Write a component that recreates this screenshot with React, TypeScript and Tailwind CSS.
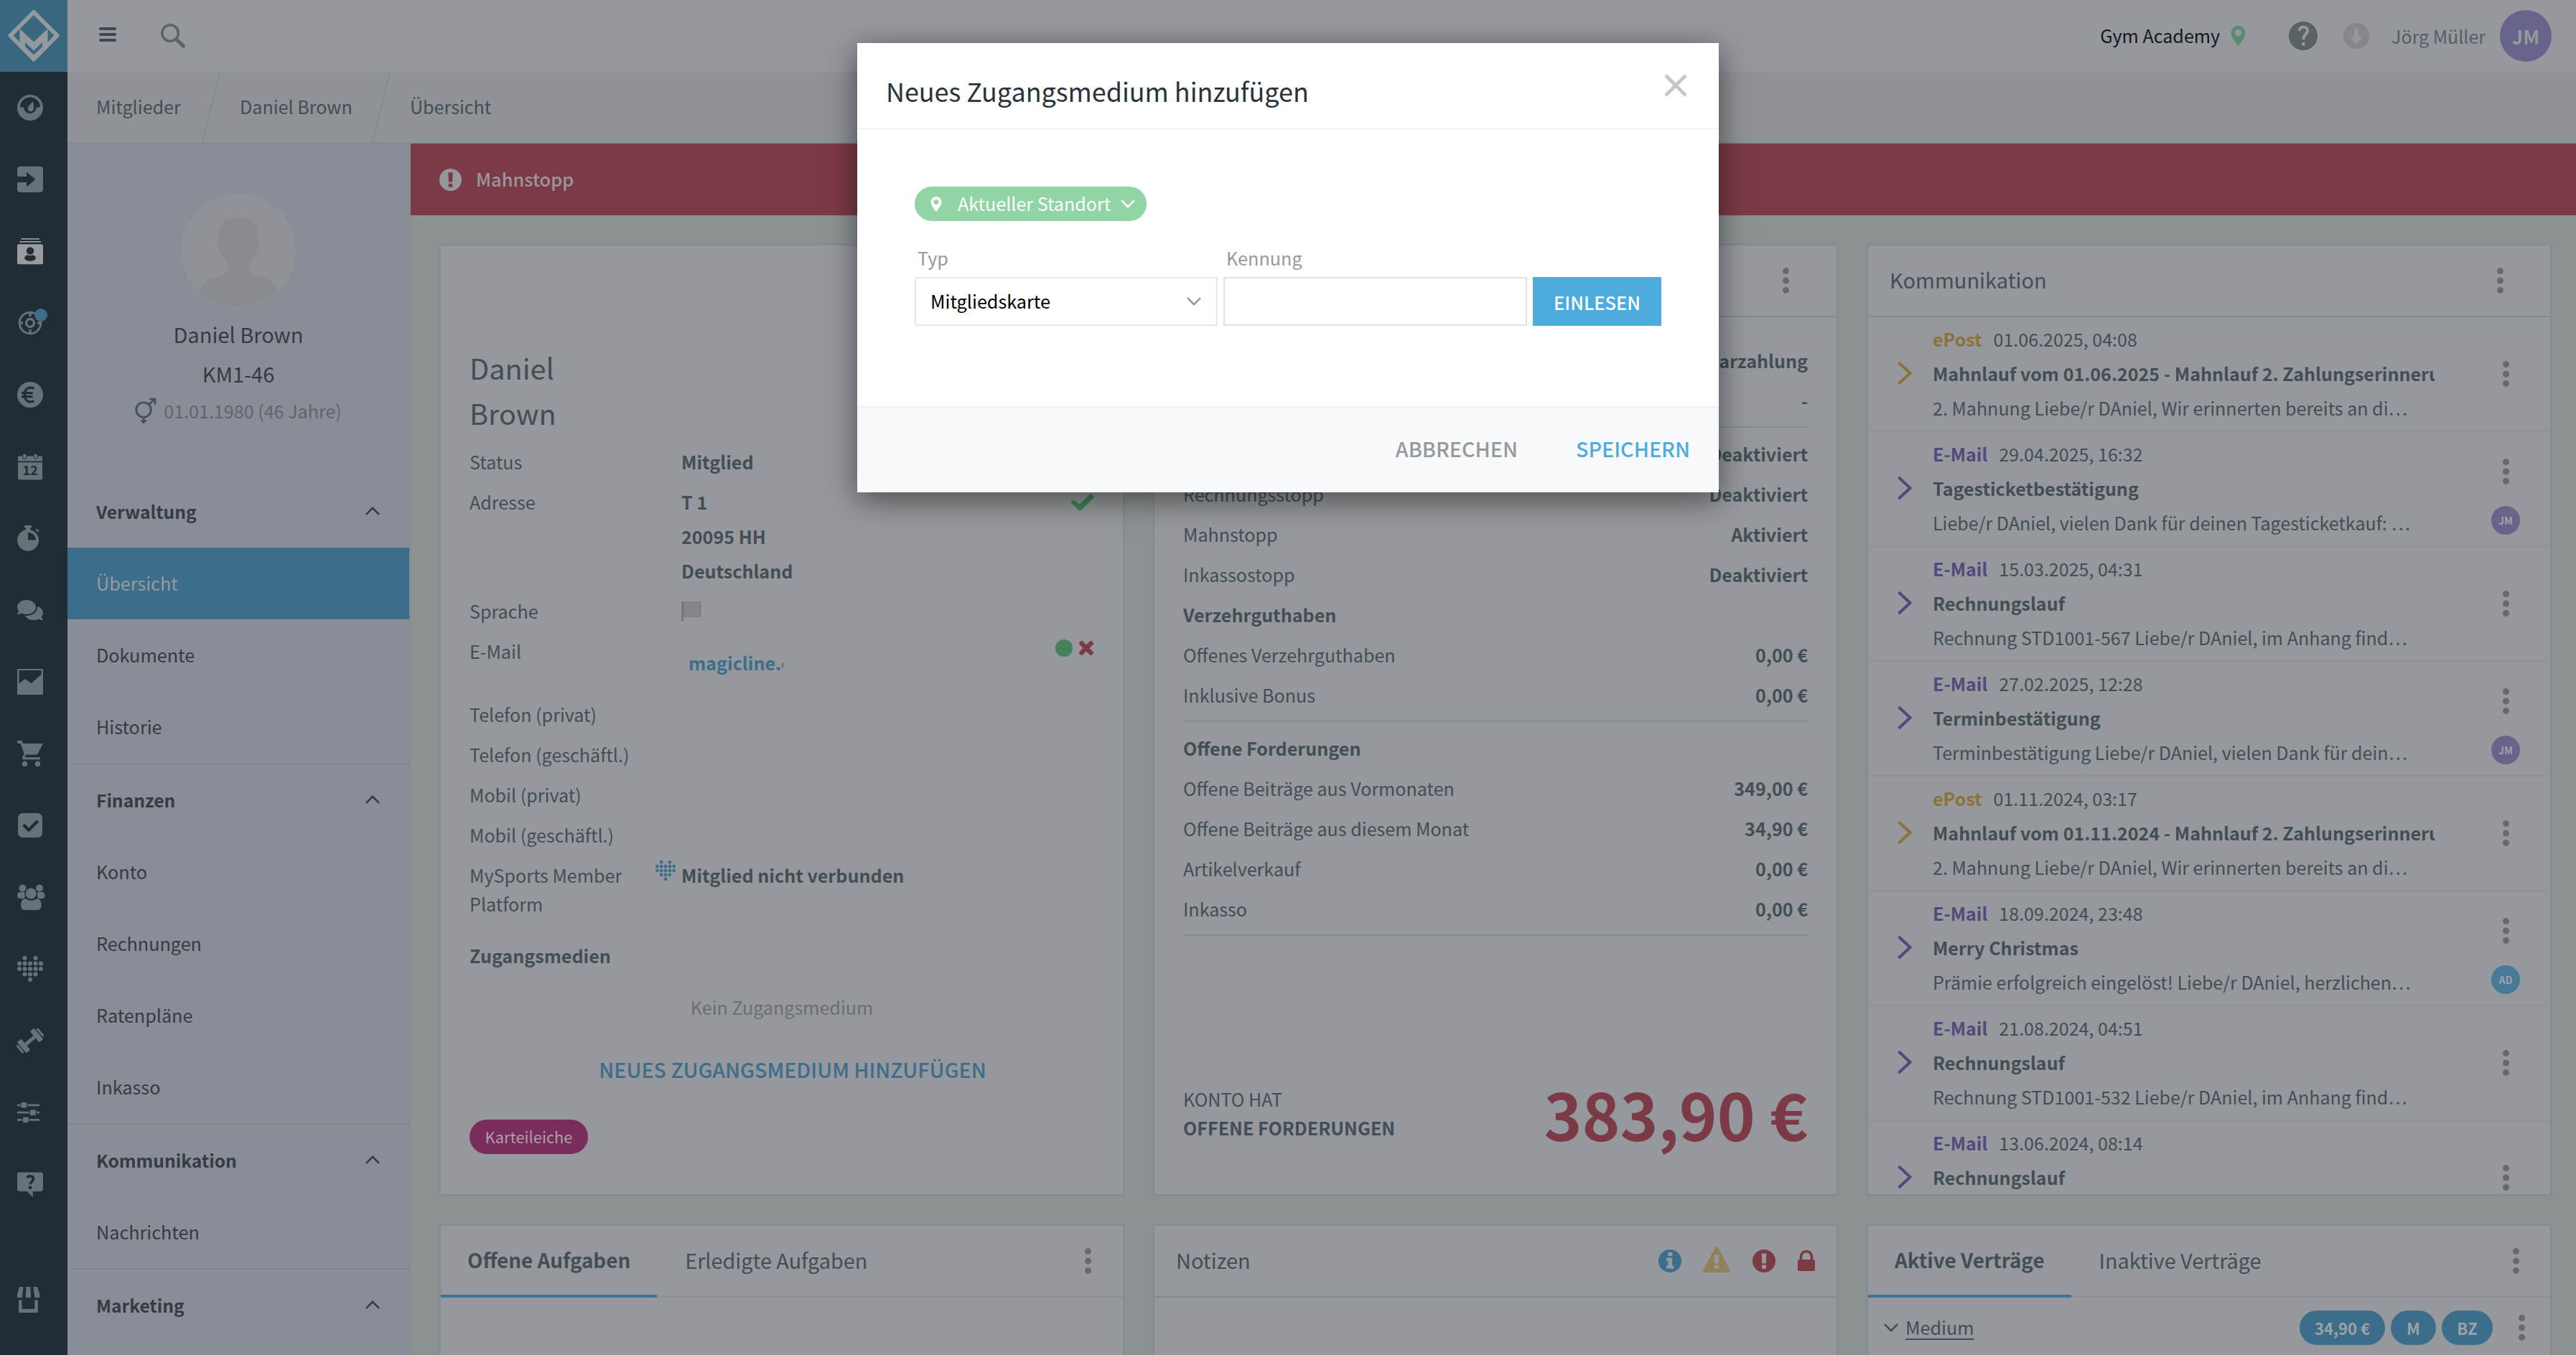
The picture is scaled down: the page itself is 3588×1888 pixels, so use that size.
import React from "react";
import type { ReactNode } from "react";
import { FaComments } from "react-icons/fa";
import { MdShoppingCart } from "react-icons/md";

/* ---------- shared icons ---------- */

type IconProps = { className?: string };

const Dots = ({ className = "" }: IconProps) => (
  <svg viewBox="0 0 9 36" className={`h-9 w-[9px] shrink-0 fill-[#66696e] ${className}`}>
    <circle cx="4.5" cy="4.6" r="4.5" />
    <circle cx="4.5" cy="18" r="4.5" />
    <circle cx="4.5" cy="31.4" r="4.5" />
  </svg>
);

const Chevron = ({ className = "" }: IconProps) => (
  <svg viewBox="0 0 20 12" className={`h-3 w-5 shrink-0 fill-none ${className}`}>
    <path d="M1 1.2 10 10.2 19 1.2" stroke="currentColor" strokeWidth="2.600" />
  </svg>
);

const Pin = ({ className = "" }: IconProps) => (
  <svg viewBox="0 0 20 28" className={`shrink-0 fill-current ${className}`}>
    <path
      fillRule="evenodd"
      d="M10 0C4.5 0 0 4.4 0 9.9 0 16.8 10 28 10 28s10-11.2 10-18.1C20 4.400 15.500 0 10 0Zm0 5.200a4.700 4.700 0 1 1 0 9.400 4.700 4.700 0 0 1 0-9.400Z"
    />
  </svg>
);

const ExclCircle = ({ className = "" }: IconProps) => (
  <svg viewBox="0 0 32 32" className={`shrink-0 fill-current ${className}`}>
    <path
      fillRule="evenodd"
      d="M16 0a16 16 0 1 1 0 32 16 16 0 0 1 0-32Zm-3.300 5.400.6 14h5.400l.6-14Zm.4 16v5.300h5.800v-5.300Z"
    />
  </svg>
);

const HeartDots = ({ className = "" }: IconProps) => {
  const rows: [number, number[]][] = [
    [3, [10.500, 25.500]],
    [10.500, [3, 10.500, 18, 25.500, 33]],
    [18, [3, 10.500, 18, 25.500, 33]],
    [25.500, [10.500, 18, 25.500]],
    [33, [18]],
  ];
  return (
    <svg viewBox="0 0 36 36" className={`shrink-0 fill-current ${className}`}>
      {rows.map(([y, xs]) => xs.map((x) => <circle key={`${x}-${y}`} cx={x} cy={y} r="3.050" />))}
    </svg>
  );
};

/* ---------- navigation rail ---------- */

const RailSvg = ({ children }: { children: ReactNode }) => (
  <svg viewBox="0 0 36 36" className="h-9 w-9 overflow-visible fill-current">
    {children}
  </svg>
);

const railIcons: ReactNode[] = [
  <RailSvg>
    <circle cx="18" cy="18" r="18" />
    <path className="fill-[#202d36]" d="M4 17.500a14 14 0 0 1 28 0h-5.500c0 1.800-.5 3.300-1.300 4.700A9.500 9.500 0 0 1 18 26a9.500 9.500 0 0 1-7.400-3.600A8.800 8.800 0 0 1 9 17.500Z" />
    <path d="M22.200 9.500c1 4.500 1.300 8.500.6 11a4.400 4.400 0 0 1-8.300-.4c-.6-2.700 3.200-7 7.700-10.600Z" />
  </RailSvg>,
  <RailSvg>
    <path d="M4 0h28a4 4 0 0 1 4 4v28a4 4 0 0 1-4 4H4a4 4 0 0 1-4-4V22h13v6.500L25.500 18 13 7.500V14H0V4a4 4 0 0 1 4-4Z" />
  </RailSvg>,
  <RailSvg>
    <path d="M5.500 0h25.500v1.800H5.500ZM3 3.900h30v1.800H3Z" />
    <path fillRule="evenodd" d="M2.500 8.200h31A2.500 2.500 0 0 1 36 10.700v23a2.500 2.500 0 0 1-2.500 2.500h-31A2.500 2.500 0 0 1 0 33.700v-23a2.500 2.500 0 0 1 2.500-2.500Z" />
    <circle className="fill-[#202d36]" cx="18" cy="17.500" r="5.200" />
    <path className="fill-[#202d36]" d="M10 28c.3-3.200 2.600-4.600 5-4.800 1.800 1.300 4.200 1.300 6 0 2.400.2 4.700 1.600 5 4.800-1.500 3-5 3.700-8 3.700s-6.500-.7-8-3.700Z" />
  </RailSvg>,
  <RailSvg>
    <g fill="none" stroke="currentColor" strokeWidth="3">
      <circle cx="18" cy="18" r="14.800" />
      <circle cx="18" cy="18" r="5.500" strokeWidth="3.400" />
      <path d="M18 3v6M18 27v6M3 18h5M28 18h5" strokeWidth="3.500" />
    </g>
  </RailSvg>,
  <RailSvg>
    <circle cx="18" cy="18" r="18" />
    <path className="fill-none stroke-[#202d36]" strokeWidth="3.200" d="M23.500 9.400c-7-3.200-13.300-.2-13.300 8.600s6.300 11.800 13.300 8.600M6 15.600h15.500M6 20.600h15.500" />
  </RailSvg>,
  <RailSvg>
    <path d="M2.500 3.500h31A1.500 1.500 0 0 1 35 5v5.500H1V5a1.500 1.500 0 0 1 1.500-1.500ZM1 12.300h34V34a2.500 2.500 0 0 1-2.500 2.500h-29A2.500 2.500 0 0 1 1 34Z" />
    <rect x="7.500" y=".3" width="5.600" height="6.800" rx="2.200" className="stroke-[#202d36]" strokeWidth="1" />
    <rect x="22.900" y=".3" width="5.600" height="6.800" rx="2.200" className="stroke-[#202d36]" strokeWidth="1" />
    <text x="18" y="30.300" textAnchor="middle" className="fill-[#202d36] text-[18px] font-bold">12</text>
  </RailSvg>,
  <RailSvg>
    <path fillRule="evenodd" d="M10 1.500C10 .7 10.700 0 11.500 0h7c.8 0 1.500.7 1.500 1.500v1.800h-2V6a15 15 0 1 1-6 0V3.300h-2ZM15 10v10.500h11.200A11.200 11.200 0 0 0 15 10Z" />
    <path d="m25.500 6 1.500-1.700 3.500 3-1.300 2.500Z" />
  </RailSvg>,
  <FaComments className="h-9 w-9" />,
  <RailSvg>
    <path fillRule="evenodd" d="M1 0h34a1 1 0 0 1 1 1v34a1 1 0 0 1-1 1H1a1 1 0 0 1-1-1V1a1 1 0 0 1 1-1Zm1.500 2v18.500l8.500-6.500 8.500 6L33.500 8V2Z" />
  </RailSvg>,
  <RailSvg>
    <path d="M0 0h6.500l1.600 4H36l-7 13.500c-.6 1.200-1.600 2-3 2H12l-1.800 3.800H32v3H9.500c-2.200 0-3.200-1.500-2.200-3.500l2.400-4.600L4.500 3.800H0Z" />
    <circle cx="10.500" cy="32.300" r="3.700" />
    <circle cx="28.500" cy="32.300" r="3.700" />
  </RailSvg>,
  <RailSvg>
    <rect x="1" y="1" width="34" height="34" rx="6.500" />
    <path className="fill-none stroke-[#202d36]" strokeWidth="4.400" strokeLinecap="round" strokeLinejoin="round" d="m10 18.500 6 6L27.500 13" />
  </RailSvg>,
  <RailSvg>
    <circle cx="7.500" cy="5.500" r="5" />
    <circle cx="31" cy="5.500" r="5" />
    <path d="M0 15.500c0-3 1.500-4.500 4-4.500h5.500c1 0 1.500 1 1.500 2.500 0 3-.5 6.500-3 6.500H4c-2.500 0-4-1.500-4-4.500ZM38.500 15.500c0-3-1.500-4.500-4-4.500H29c-1 0-1.500 1-1.500 2.500 0 3 .5 6.500 3 6.500h4c2.500 0 4-1.500 4-4.500Z" />
    <circle cx="19.200" cy="13" r="8.300" className="stroke-[#202d36]" strokeWidth="1.500" />
    <path d="M5 29c0-5 2-9 6.500-9 4.500 3.500 11 3.500 15.500 0 4.500 0 6.700 4 6.700 9 0 4-1.700 7-5.500 7H10.500C6.700 36 5 33 5 29Z" />
  </RailSvg>,
  <HeartDots className="h-9 w-9" />,
  <RailSvg>
    <g transform="rotate(-40 18 18)">
      <rect x="10" y="15.600" width="16" height="4.800" />
      <rect x="2.600" y="8" width="7.400" height="20" rx="1.500" />
      <rect x="26" y="8" width="7.400" height="20" rx="1.500" />
      <rect x="-1.800" y="11" width="3" height="14" rx="1.200" />
      <rect x="34.800" y="11" width="3" height="14" rx="1.200" />
    </g>
  </RailSvg>,
  <RailSvg>
    <path d="M0 6.500h31v2.800H0ZM0 16.700h31v2.800H0ZM0 27h31v2.800H0Z" />
    <g className="stroke-[#202d36]" strokeWidth="1">
      <rect x="4.700" y="3.500" width="9" height="8.600" rx="2" />
      <rect x="17.400" y="13.800" width="9" height="8.600" rx="2" />
      <rect x="7.300" y="24.100" width="9" height="8.600" rx="2" />
    </g>
  </RailSvg>,
  <RailSvg>
    <path d="M3 1.500h30a3 3 0 0 1 3 3v20.600a3 3 0 0 1-3 3H21.800v8L13.500 28.100H3a3 3 0 0 1-3-3V4.500a3 3 0 0 1 3-3Z" />
    <path className="fill-none stroke-[#202d36]" strokeWidth="3.600" d="M13.300 8.600c3.500-3 9.300-1.800 9.300 2 0 3.600-4.300 3.300-4.500 7.600" />
    <circle className="fill-[#202d36]" cx="18" cy="22.700" r="2.400" />
  </RailSvg>,
];

const StoreIcon = () => (
  <RailSvg>
    <path d="M3 0h5.500L6.800 15H0v-5ZM12.500 0h5.800l.9 15h-7.600ZM22.500 0h5.500l3.200 10v5h-6.800Z" />
    <path d="M2 18.500h4.500v12.200h17.800V18.500h4.500v16.300a1.200 1.200 0 0 1-1.200 1.200H3.200A1.200 1.200 0 0 1 2 34.800Z" />
  </RailSvg>
);

const Rail = () => (
  <nav className="flex h-full w-[94px] shrink-0 flex-col bg-[#202d36] text-[#677178]">
    <div className="flex h-[100px] items-center justify-center bg-[#38677f]">
      <svg viewBox="0 0 72 72" className="h-[72px] w-[72px]">
        <path d="M36 3 68.500 35.500 36 68.500 3.500 35.500Z" className="fill-none stroke-[#96999c]" strokeWidth="6" strokeLinejoin="round" />
        <path d="M16.500 26 36 44.500 55.500 26v20.500L36 68 16.500 46.500Z" className="fill-[#96999c]" />
        <path d="M24 45 36 56.500 48 45v6L36 62.500 24 51Z" className="fill-[#38677f]" />
      </svg>
    </div>
    {railIcons.map((icon, i) => (
      <div key={i} className={`flex h-[100px] items-center pl-6 ${i === 2 ? "text-[#999b9e]" : ""}`}>
        <div className="relative flex h-9 w-9 items-center justify-center">
          {icon}
          {i === 3 && <span className="absolute -top-[2px] left-6 h-[18px] w-[18px] rounded-full bg-[#3c6d8a]" />}
        </div>
      </div>
    ))}
    <div className="mt-[93px] pl-6">
      <StoreIcon />
    </div>
  </nav>
);

/* ---------- top bars ---------- */

const TopBar = () => (
  <header className="flex h-[100px] shrink-0 items-center bg-[#95989c] pr-[34px]">
    <div className="ml-11 flex w-6 flex-col gap-1 pb-1">
      <span className="h-1 rounded-sm bg-[#3d4852]" />
      <span className="h-1 rounded-sm bg-[#3d4852]" />
      <span className="h-1 rounded-sm bg-[#3d4852]" />
    </div>
    <svg viewBox="0 0 34 34" className="ml-[62px] h-[34px] w-[34px] fill-none stroke-[#5a6468]">
      <circle cx="13" cy="13" r="11.300" strokeWidth="3.500" />
      <path d="m23.500 23.500 8 7.800" strokeWidth="5" strokeLinecap="round" />
    </svg>
    <span className="ml-auto text-[25.100px] text-[#14191f]">Gym Academy</span>
    <Pin className="ml-[15px] h-7 w-[21px] text-[#5c8a70]" />
    <svg viewBox="0 0 40 40" className="ml-[60px] h-10 w-10">
      <circle cx="20" cy="20" r="20" className="fill-[#596165]" />
      <path d="M14.500 13c1-8 12.500-6.500 11.500.5-.6 4-5.500 4.700-5.800 11.500" className="fill-none stroke-[#95989c]" strokeWidth="4" />
      <rect x="18" y="29" width="4.400" height="4.600" className="fill-[#95989c]" />
    </svg>
    <svg viewBox="0 0 36 36" className="ml-9 h-9 w-9">
      <circle cx="18" cy="18" r="18" className="fill-[#84888b]" />
      <path d="M15.300 8h5.600v11.500H27L18.100 29 9.200 19.500h6.100Z" className="fill-[#95989c]" />
    </svg>
    <span className="ml-[31px] text-[25px] text-[#545e63]">Jörg Müller</span>
    <span className="ml-5 flex h-[72px] w-[72px] items-center justify-center rounded-full bg-[#66648a] text-[27px] font-bold text-[#95989c]">
      JM
    </span>
  </header>
);

const Slash = () => (
  <svg viewBox="0 0 26 96" className="h-24 w-[26px] fill-none stroke-[#848b8f]">
    <path d="M25 0 1 96" strokeWidth="2" />
  </svg>
);

const Breadcrumbs = () => (
  <div className="flex h-[100px] shrink-0 items-center border-b-2 border-[#848b8d] bg-[#8f9296] pl-[40px] text-[25.100px] text-[#434e54]">
    <span className="w-[147px]">Mitglieder</span>
    <Slash />
    <span className="ml-[27px] w-[184px]">Daniel Brown</span>
    <Slash />
    <span className="ml-[27px]">Übersicht</span>
  </div>
);

/* ---------- member side panel ---------- */

const sections = [
  { title: "Verwaltung", items: ["Übersicht", "Dokumente", "Historie"] },
  { title: "Finanzen", items: ["Konto", "Rechnungen", "Ratenpläne", "Inkasso"] },
  { title: "Kommunikation", items: ["Nachrichten"] },
  { title: "Marketing", items: [] },
];

const SidePanel = () => (
  <aside className="flex h-full w-[478px] shrink-0 flex-col border-r-2 border-[#848b8d] bg-[#898d95] text-[25.200px] text-[#343b44]">
    <div className="flex h-[463px] shrink-0 flex-col items-center pt-[70px]">
      <svg viewBox="0 0 160 160" className="h-40 w-40">
        <circle cx="80" cy="80" r="80" className="fill-[#8f9296]" />
        <path
          className="fill-[#888b8f]"
          d="M80 32c18 0 27 12 27.500 26v8c2 1 2 4 1.500 7-.5 4-2 7-4.500 7.500-2 8-5 14-9.500 18-1.500 2-1.500 4 0 6 1 3 1.500 6 5 7.500 8 3.500 16 5 23 8.500 5 3 9 8 12 16A80 80 0 0 1 25 136c3-7 7-12 12-15.500 7-3.500 15-5 23-8.500 3.500-1.500 4-4.500 5-7.500 1.500-2 1.500-4 0-6-4.500-4-7.500-10-9.500-18-2.500-.5-4-3.500-4.500-7.500-.5-3-.5-6 1.500-7v-8C53 44 62 32 80 32Z"
        />
      </svg>
      <span className="mt-2 text-[29px] leading-[55px]">Daniel Brown</span>
      <span className="text-[29px] leading-[55px]">KM1-46</span>
      <div className="flex items-center gap-[10px] pt-[2px] text-[25.100px] text-[#60656d]">
        <svg viewBox="0 0 30 36" className="h-9 w-[30px] fill-none stroke-[#434e54]" strokeWidth="2.600">
          <circle cx="12" cy="17" r="10.300" />
          <path d="M12 27.500V36M8 32.500h8M19.500 9.500 27.500 2M20.500 2H28v7.500" />
        </svg>
        <span className="leading-[44px]">01.01.1980 (46 Jahre)</span>
      </div>
    </div>
    {sections.map((s, i) => (
      <div key={s.title} className={`flex flex-col ${i > 0 ? "border-t-2 border-[#80848b]" : ""}`}>
        <div className="flex h-[100px] items-center justify-between pr-[41px] pb-[2px] pl-10">
          <span className="text-[24.600px] font-bold">{s.title}</span>
          <Chevron className="rotate-180" />
        </div>
        {s.items.map((item) => (
          <div
            key={item}
            className={`flex h-[100px] items-center pl-10 ${item === "Übersicht" ? "bg-[#3c6d8a] text-[#989b9f]" : ""}`}
          >
            {item}
          </div>
        ))}
      </div>
    ))}
  </aside>
);

/* ---------- cards ---------- */

const Card = ({ className = "", children }: { className?: string; children?: ReactNode }) => (
  <section className={`flex w-[954px] flex-col overflow-hidden border-2 border-[#848b8d] bg-[#95989c] ${className}`}>
    {children}
  </section>
);

const Row = ({ label, children }: { label: string; children?: ReactNode }) => (
  <div className="flex py-1 leading-[48px]">
    <span className="w-[295px] shrink-0">{label}</span>
    {children}
  </div>
);

const MemberCard = () => (
  <Card className="h-[1326px] pr-[40px] pl-[40px] text-[25.100px]">
    <h1 className="mt-[138px] w-[160px] text-[39.600px] leading-[63px]">Daniel Brown</h1>
    <div className="mt-[9px]">
      <Row label="Status">
        <b>Mitglied</b>
      </Row>
      <Row label="Adresse">
        <b className="flex-1">
          T 1<br />
          20095 HH
          <br />
          Deutschland
        </b>
        <svg viewBox="0 0 32 25" className="mt-3 h-[25px] w-8 fill-[#43825a]">
          <path d="M4.500 10.500a2 2 0 0 0-2.800 0l-1 1a2 2 0 0 0 0 2.800l10 10a2 2 0 0 0 2.800 0L31 7a2 2 0 0 0 0-2.800L28.500 1.700a2 2 0 0 0-2.800 0L12 15.500Z" />
        </svg>
      </Row>
      <Row label="Sprache">
        <svg viewBox="0 0 28 30" className="mt-[10px] h-[30px] w-7">
          <path d="M3 2.500c6-3 12 2 24-1v20c-10 3-16-2-24 1.500Z" className="fill-[#83868a] stroke-[#74777b]" strokeWidth="1" />
          <path d="M1.300 1v28" className="stroke-[#6b6e72]" strokeWidth="2" />
        </svg>
      </Row>
      <div className="flex h-[88px] py-1 leading-[48px]">
        <span className="w-[305px] shrink-0">E-Mail</span>
        <b className="mt-4 h-12 w-[132px] overflow-hidden whitespace-nowrap text-[#3c6d8a]">magicline.com</b>
        <span className="mt-2 ml-auto h-6 w-6 rounded-full bg-[#43825a]" />
        <svg viewBox="0 0 20 20" className="mt-[10px] mr-[1px] ml-[9px] h-5 w-5 stroke-[#7c3a47]">
          <path d="m3.500 3.500 13 13M16.500 3.500l-13 13" strokeWidth="6.500" strokeLinecap="round" />
        </svg>
      </div>
      <Row label="Telefon (privat)" />
      <Row label="Telefon (geschäftl.)" />
      <Row label="Mobil (privat)" />
      <Row label="Mobil (geschäftl.)" />
      <div className="flex pt-2 pb-6 leading-10">
        <span className="w-[259px] shrink-0 pr-8">MySports Member Platform</span>
        <HeartDots className="mr-2 h-7 w-7 text-[#3c6d8a]" />
        <b>Mitglied nicht verbunden</b>
      </div>
      <div className="py-1 leading-[48px] font-bold">Zugangsmedien</div>
      <div className="mt-4 text-center leading-[56px] text-[#6b6e73]">Kein Zugangsmedium</div>
      <div className="mt-[9px] pl-[30px] text-center text-[28.600px] leading-[100px] font-medium whitespace-nowrap text-[#3c6d8a]">
        NEUES ZUGANGSMEDIUM HINZUFÜGEN
      </div>
      <span className="mt-5 flex h-12 w-[165px] items-center justify-center rounded-full bg-[#7a2d5c] text-[21.900px] text-[#a79fa9]">
        Karteileiche
      </span>
    </div>
  </Card>
);

type Line = [string, string];

const Lines = ({ rows, last }: { rows: Line[]; last?: boolean }) => (
  <div className={`border-b-2 border-[#848d90] pb-2 ${last ? "" : "mb-2"}`}>
    {rows.map(([label, value], i) => (
      <div key={i} className="flex h-14 items-center justify-between leading-[48px]">
        <span className={value || label === "Inkasso" ? "" : "font-bold"}>{label}</span>
        <b>{value}</b>
      </div>
    ))}
  </div>
);

const AccountCard = () => (
  <Card className="h-[1326px] text-[25.100px]">
    <div className="flex h-[100px] shrink-0 items-center justify-end border-b-2 border-[#848b8d] pr-[66px]">
      <Dots />
    </div>
    <div className="mx-10 mt-8">
      <Lines rows={[["", "Barzahlung"], ["", "-"]]} />
      <Lines
        rows={[
          ["", "Deaktiviert"],
          ["Rechnungsstopp", "Deaktiviert"],
          ["Mahnstopp", "Aktiviert"],
          ["Inkassostopp", "Deaktiviert"],
          ["Verzehrguthaben", ""],
          ["Offenes Verzehrguthaben", "0,00 €"],
          ["Inklusive Bonus", "0,00 €"],
        ]}
      />
      <Lines
        last
        rows={[
          ["Offene Forderungen", ""],
          ["Offene Beiträge aus Vormonaten", "349,00 €"],
          ["Offene Beiträge aus diesem Monat", "34,90 €"],
          ["Artikelverkauf", "0,00 €"],
          ["Inkasso", "0,00 €"],
        ]}
      />
    </div>
    <div className="mx-10 mt-auto mb-[63px] flex items-center justify-between">
      <div className="leading-10">
        KONTO HAT
        <br />
        <b>OFFENE FORDERUNGEN</b>
      </div>
      <span className="text-[89.800px] leading-[100px] font-bold text-[#7c3a47]">383,90 €</span>
    </div>
  </Card>
);

type Message = { kind: "ePost" | "E-Mail"; date: string; title: string; text: string; by?: "JM" | "AD" };

const messages: Message[] = [
  { kind: "ePost", date: "01.06.2025, 04:08", title: "Mahnlauf vom 01.06.2025 - Mahnlauf 2. Zahlungserinnerung", text: "2. Mahnung Liebe/r DAniel, Wir erinnerten bereits an di…" },
  { kind: "E-Mail", date: "29.04.2025, 16:32", title: "Tagesticketbestätigung", text: "Liebe/r DAniel, vielen Dank für deinen Tagesticketkauf: …", by: "JM" },
  { kind: "E-Mail", date: "15.03.2025, 04:31", title: "Rechnungslauf", text: "Rechnung STD1001-567 Liebe/r DAniel, im Anhang find…" },
  { kind: "E-Mail", date: "27.02.2025, 12:28", title: "Terminbestätigung", text: "Terminbestätigung Liebe/r DAniel, vielen Dank für dein…", by: "JM" },
  { kind: "ePost", date: "01.11.2024, 03:17", title: "Mahnlauf vom 01.11.2024 - Mahnlauf 2. Zahlungserinnerung", text: "2. Mahnung Liebe/r DAniel, Wir erinnerten bereits an di…" },
  { kind: "E-Mail", date: "18.09.2024, 23:48", title: "Merry Christmas", text: "Prämie erfolgreich eingelöst! Liebe/r DAniel, herzlichen…", by: "AD" },
  { kind: "E-Mail", date: "21.08.2024, 04:51", title: "Rechnungslauf", text: "Rechnung STD1001-532 Liebe/r DAniel, im Anhang find…" },
  { kind: "E-Mail", date: "13.06.2024, 08:14", title: "Rechnungslauf", text: "" },
];

const MessageRow = ({ m }: { m: Message }) => {
  const tone = m.kind === "ePost" ? "text-[#8c7238]" : "text-[#504a7d]";
  return (
    <div className="mr-[2px] flex h-40 shrink-0 border-b-2 border-[#8e9195]">
      <svg viewBox="0 0 21 34" className={`mt-[61px] ml-10 h-[34px] w-[21px] shrink-0 fill-none ${tone}`}>
        <path d="M2.500 2 18.500 17 2.500 32" stroke="currentColor" strokeWidth="4" />
      </svg>
      <div className="ml-[29px] w-[699px] overflow-hidden pt-[6px] text-[25.050px] leading-[48px] whitespace-nowrap">
        <div className="flex gap-4">
          <b className={tone}>{m.kind}</b>
          <span>{m.date}</span>
        </div>
        <div className="font-bold">{m.title}</div>
        <div>{m.text}</div>
      </div>
      <div className={`ml-[79px] flex w-10 flex-col items-center ${m.by ? "pt-[37px]" : "pt-[61px]"}`}>
        <Dots />
        {m.by && (
          <span
            className={`mt-[30px] flex h-10 w-10 items-center justify-center rounded-full text-[14px] font-bold text-[#a0a1ab] ${
              m.by === "JM" ? "bg-[#66648a]" : "bg-[#467a97]"
            }`}
          >
            {m.by}
          </span>
        )}
      </div>
    </div>
  );
};

const CommunicationCard = () => (
  <Card className="h-[1326px] text-[25.100px]">
    <div className="flex h-[100px] shrink-0 items-center justify-between border-b-2 border-[#848b8d] pr-[65px] pl-[30px] text-[29px]">
      <span className="pb-[3px]">Kommunikation</span>
      <Dots />
    </div>
    {messages.map((m) => (
      <MessageRow key={m.date} m={m} />
    ))}
  </Card>
);

const Tabs = ({ active, other, pad }: { active: string; other: string; pad: string }) => (
  <div className={`flex h-[100px] shrink-0 items-center border-b-2 border-[#8a8e91] ${pad}`}>
    <span className="-mb-[2px] flex h-[100px] items-center border-b-4 border-[#3f7493] px-[37px] text-[27.800px] font-bold">
      {active}
    </span>
    <span className="ml-[39px] pb-[2px] text-[28.800px]">{other}</span>
    <Dots className="ml-auto" />
  </div>
);

const TasksCard = () => (
  <Card className="h-[400px]">
    <Tabs active="Offene Aufgaben" other="Erledigte Aufgaben" pad="pr-[44px]" />
  </Card>
);

const NotesCard = () => (
  <Card className="h-[400px]">
    <div className="flex h-[100px] shrink-0 items-center border-b-2 border-[#848b8d] pr-[30px] pl-[30px] text-[28.900px]">
      <span className="mr-auto pb-[3px]">Notizen</span>
      <svg viewBox="0 0 32 32" className="h-8 w-8">
        <circle cx="16" cy="16" r="16" className="fill-[#3c6d8a]" />
        <path d="M13.300 4h6v5h-6ZM11 11.500h8.300v11H21.500v4H11v-4h2.300v-7H11Z" className="fill-[#95989c]" />
      </svg>
      <svg viewBox="0 0 38 36" className="mt-[-4px] ml-[30px] h-9 w-[38px]">
        <path d="M19 0c1 0 1.700.5 2.200 1.400L37.600 32.300c1 1.900-.2 3.700-2.300 3.700H2.700C.6 36-.6 34.200.4 32.300L16.800 1.400C17.300.5 18 0 19 0Z" className="fill-[#908159]" />
        <path d="m15.700 11 .7 12.500h5.200l.7-12.500Zm.3 14.500v5.200h6v-5.200Z" className="fill-[#95989c]" />
      </svg>
      <ExclCircle className="ml-[31px] h-8 w-8 text-[#7c3a47]" />
      <svg viewBox="0 0 24 29" className="mt-[-2px] ml-[31px] h-[29px] w-6">
        <rect y="13" width="24" height="16" rx="2" className="fill-[#7c3a47]" />
        <path d="M4.500 14V9a7.500 7.500 0 0 1 15 0v5" className="fill-none stroke-[#7c3a47]" strokeWidth="3.600" />
      </svg>
    </div>
  </Card>
);

const Badge = ({ width, children }: { width: string; children: ReactNode }) => (
  <span className={`flex h-12 items-center justify-center rounded-full bg-[#3c6d8a] text-[22px] font-bold text-[#9da2a7] ${width}`}>
    {children}
  </span>
);

const ContractsCard = () => (
  <Card className="h-[400px]">
    <Tabs active="Aktive Verträge" other="Inaktive Verträge" pad="pr-[43px]" />
    <div className="flex h-[84px] items-center pr-[35px] pl-[22px]">
      <Chevron className="text-[#434e54]" />
      <span className="ml-[10px] text-[25.200px] underline decoration-2 underline-offset-[5px]">Medium</span>
      <div className="ml-auto flex gap-2">
        <Badge width="w-[119px]">34,90 €</Badge>
        <Badge width="w-[63px]">M</Badge>
        <Badge width="w-[71px]">BZ</Badge>
      </div>
      <Dots className="ml-[36px]" />
    </div>
  </Card>
);

/* ---------- dialog ---------- */

const Dialog = () => (
  <div className="absolute top-[60px] left-[1194px] flex h-[626px] w-[1200px] flex-col bg-white shadow-[0_10px_40px_rgba(0,0,0,0.5)]">
    <div className="flex h-[120px] shrink-0 items-start justify-between border-b-2 border-[#f1f2f3] pr-11 pl-10">
      <h2 className="pt-[31px] text-[35.900px] leading-[70px] text-[#2a323b]">Neues Zugangsmedium hinzufügen</h2>
      <svg viewBox="0 0 32 32" className="mt-[43px] h-8 w-8 stroke-[#c4c6c8]">
        <path d="m2 2 28 28M30 2 2 30" strokeWidth="4.600" />
      </svg>
    </div>
    <div className="flex flex-1 flex-col items-start px-20 pt-20 text-[25.200px]">
      <div className="flex h-12 items-center rounded-full bg-[#90d5a3] pr-4 pl-[22px] text-white">
        <Pin className="h-[21px] w-4" />
        <span className="mr-[14px] ml-[22px] text-[25.100px]">Aktueller Standort</span>
        <Chevron />
      </div>
      <div className="mt-[31px] flex items-end gap-2">
        <div className="w-[422px] text-[#96999c]">
          <div className="pl-1 leading-[40px]">Typ</div>
          <div className="mt-[7px] flex h-[68px] items-center justify-between border-2 border-[#e6e8e9] pr-[21px] pl-5">
            <span className="text-[25.200px] text-black">Mitgliedskarte</span>
            <Chevron />
          </div>
        </div>
        <div className="w-[423px] text-[#96999c]">
          <div className="pl-1 leading-[40px]">Kennung</div>
          <div className="mt-[7px] h-[68px] border-2 border-[#dde2e4]" />
        </div>
        <button className="h-[68px] w-[179px] bg-[#4dabde] pt-[2px] text-[25.500px] font-medium text-white">EINLESEN</button>
      </div>
    </div>
    <div className="flex h-[120px] shrink-0 items-center justify-end border-t-2 border-[#f0f2f3] bg-[#f7f9fb] pr-10 pb-[3px] text-[28.700px] font-medium">
      <span className="mr-[81px] text-[#96999c]">ABBRECHEN</span>
      <span className="text-[#4dabde]">SPEICHERN</span>
    </div>
  </div>
);

/* ---------- page ---------- */

export default function App() {
  return (
    <div className="relative flex h-[1888px] w-[3588px] overflow-hidden bg-[#8c9194] font-['Noto_Sans_CJK_SC','Noto_Sans',sans-serif] leading-none text-[#434e54]">
      <Rail />
      <div className="flex min-w-0 flex-1 flex-col">
        <TopBar />
        <Breadcrumbs />
        <div className="flex min-h-0 flex-1">
          <SidePanel />
          <main className="flex min-w-0 flex-1 flex-col">
            <div className="flex h-[100px] shrink-0 items-center bg-[#7c3a47] pl-10 text-[#96999c]">
              <ExclCircle className="h-[31px] w-[31px]" />
              <span className="ml-5 text-[25.400px] font-medium">Mahnstopp</span>
            </div>
            <div className="grid grid-cols-[954px_954px_954px] gap-10 pt-10 pl-10">
              <MemberCard />
              <AccountCard />
              <CommunicationCard />
              <TasksCard />
              <NotesCard />
              <ContractsCard />
            </div>
          </main>
        </div>
      </div>
      <Dialog />
    </div>
  );
}
